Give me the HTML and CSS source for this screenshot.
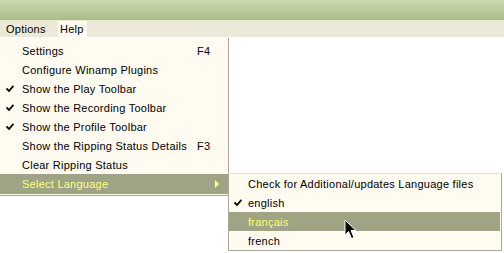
FILE: index.html
```html
<!DOCTYPE html>
<html lang="en">
<head>
    <meta charset="UTF-8">
    <title>Options menu</title>
    <link rel="stylesheet" href="styles.css">
</head>
<body>
    <div class="titlebar"></div>
    <div class="menubar">
        <span class="menubar-item open">Options</span>
        <span class="menubar-item hot">Help</span>
    </div>

    <div class="menu">
        <div class="row"><span class="check"></span><span class="label">Settings</span><span class="key">F4</span></div>
        <div class="row"><span class="check"></span><span class="label">Configure Winamp Plugins</span></div>
        <div class="row"><span class="check"><svg class="tick" width="8" height="7" viewBox="0 0 8 7"><path d="M0.5 3.5 L3 6 L7.5 0.8" fill="none" stroke="#000" stroke-width="1.8"/></svg></span><span class="label">Show the Play Toolbar</span></div>
        <div class="row"><span class="check"><svg class="tick" width="8" height="7" viewBox="0 0 8 7"><path d="M0.5 3.5 L3 6 L7.5 0.8" fill="none" stroke="#000" stroke-width="1.8"/></svg></span><span class="label">Show the Recording Toolbar</span></div>
        <div class="row"><span class="check"><svg class="tick" width="8" height="7" viewBox="0 0 8 7"><path d="M0.5 3.5 L3 6 L7.5 0.8" fill="none" stroke="#000" stroke-width="1.8"/></svg></span><span class="label">Show the Profile Toolbar</span></div>
        <div class="row"><span class="check"></span><span class="label">Show the Ripping Status Details</span><span class="key">F3</span></div>
        <div class="row"><span class="check"></span><span class="label">Clear Ripping Status</span></div>
        <div class="row selected has-sub">
            <span class="check"></span><span class="label">Select Language</span>
            <svg class="arrow" width="5" height="8" viewBox="0 0 5 8"><path d="M0 0 L4 4 L0 8 Z" fill="#ffff80"/></svg>

            <div class="menu submenu">
                <div class="row"><span class="check"></span><span class="label">Check for Additional/updates Language files</span></div>
                <div class="row"><span class="check"><svg class="tick" width="8" height="7" viewBox="0 0 8 7"><path d="M0.5 3.5 L3 6 L7.5 0.8" fill="none" stroke="#000" stroke-width="1.8"/></svg></span><span class="label">english</span></div>
                <div class="row selected"><span class="check"></span><span class="label">français</span></div>
                <div class="row"><span class="check"></span><span class="label">french</span></div>
                <svg class="cursor" width="14" height="22" viewBox="0 0 14 22">
                    <path d="M1 1 L1 16 L4.5 12.5 L7.5 19.5 L10 18.5 L7 11.5 L12 11.5 Z" fill="#000" stroke="#fff" stroke-width="1"/>
                </svg>
            </div>
        </div>
    </div>
</body>
</html>
```

FILE: styles.css
```css
body {
    margin: 0;
    width: 504px;
    height: 253px;
    background: #fff;
    font-family: "Liberation Sans", Arial, sans-serif;
    font-size: 11px;
    letter-spacing: 0.25px;
    color: #000;
    overflow: hidden;
}

.titlebar {
    height: 20px;
    background: linear-gradient(#cbd8b0, #a9bd88);
}

.menubar {
    display: flex;
    height: 17px;
    background: #ece9d8;
    align-items: stretch;
}
.menubar-item {
    display: flex;
    align-items: center;
    padding: 0 6px;
}
.menubar-item.open {
    padding-left: 6px;
    width: 43px;
}
.menubar-item.hot {
    background: #fffbf0;
    padding: 0 3px 0 2px;
    margin-left: 3px;
    margin-top: 1px;
}

.menu {
    width: 229px;
    margin-top: 1px;
    padding: 3px 0 1px 0;
    background: #fffbf0;
    border-right: 1px solid #aca899;
    border-bottom: 1px solid #aca899;
    box-sizing: border-box;
    height: 158px;
}

.row {
    display: flex;
    align-items: center;
    height: 19px;
    white-space: nowrap;
}
.check {
    display: flex;
    align-items: center;
    width: 22px;
    padding-left: 6px;
    box-sizing: border-box;
}
.label {
    flex: 1;
}
.key {
    width: 31px;
}
.row.selected {
    background: #9ea484;
    color: #ffff80;
}
.has-sub {
    position: relative;
    height: 20px;
}
.arrow {
    margin-right: 8px;
}

.submenu {
    position: absolute;
    left: 228px;
    top: -1px;
    width: 274px;
    height: 78px;
    margin: 0;
    padding: 0 1px 1px 0;
    border-left: 1px solid #aca899;
    border-top: 1px solid #e3e0d0;
    color: #000;
}
.submenu .check {
    width: 19px;
    padding-left: 5px;
}
.cursor {
    position: absolute;
    left: 115px;
    top: 45px;
}
```
